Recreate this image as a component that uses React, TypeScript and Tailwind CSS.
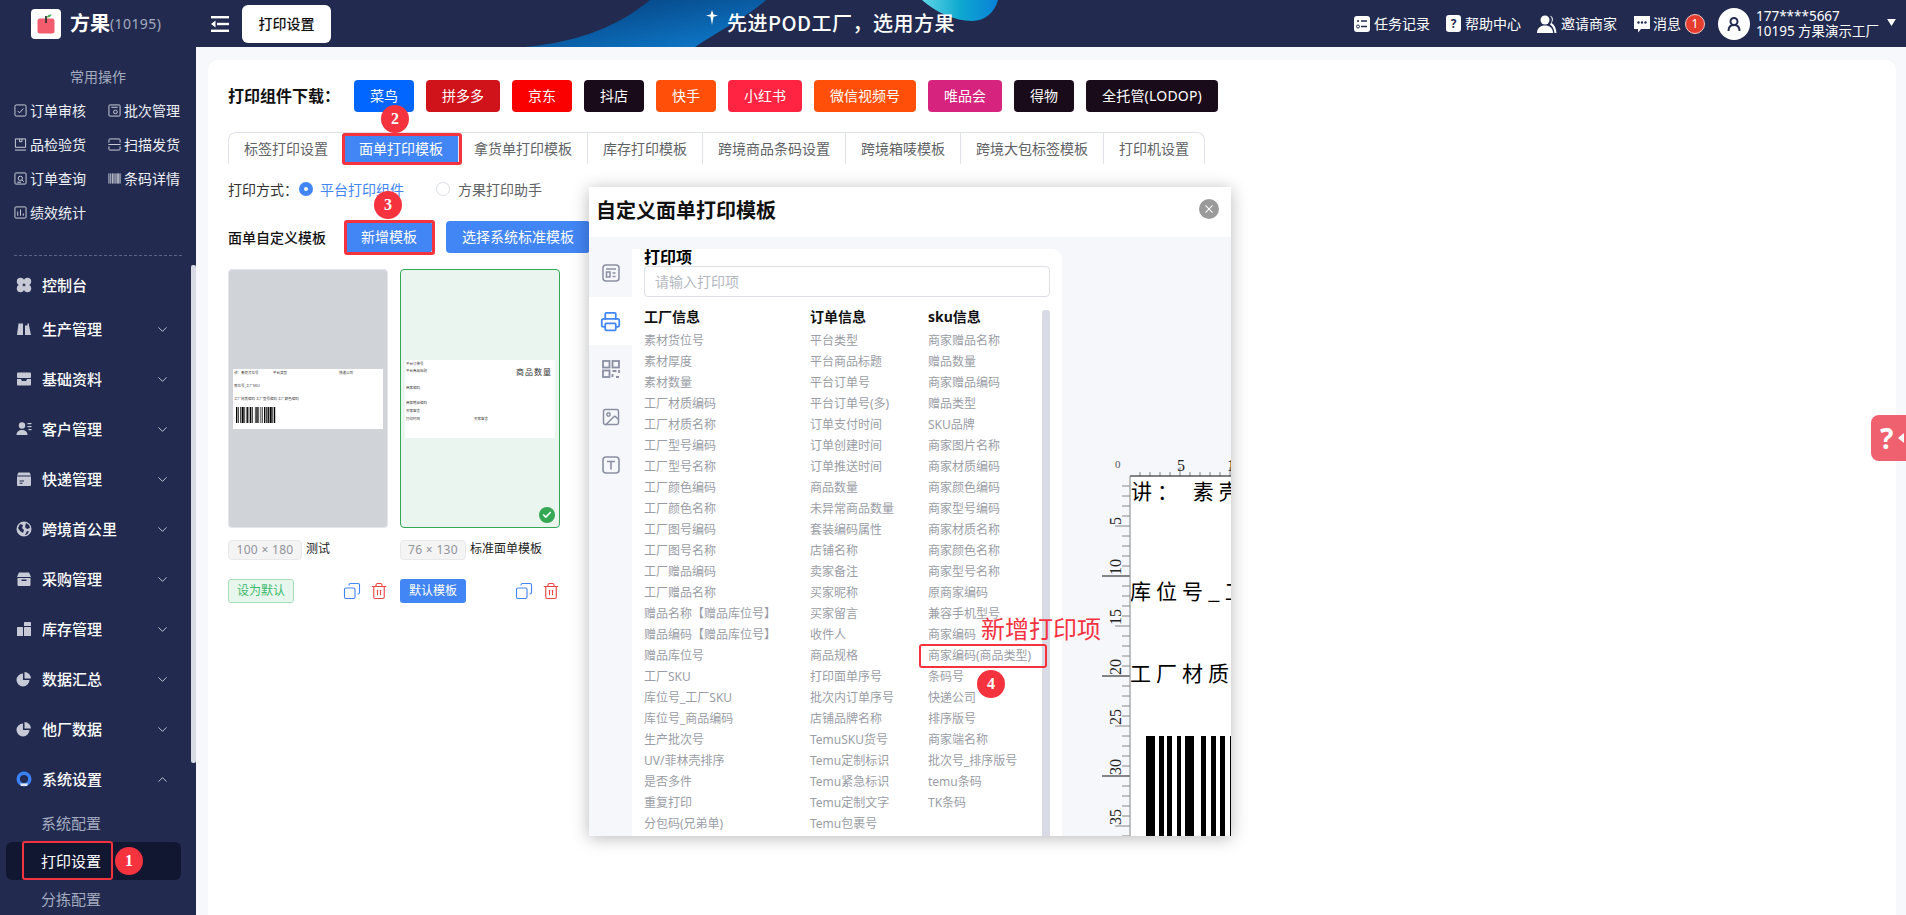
import React from "react";
import { ChevronDown, ChevronUp, Printer, Image as ImageIcon, Copy, Trash2, Check, Plus } from "lucide-react";

const brands = [
  ["菜鸟", "bg-[#0066ff]"],
  ["拼多多", "bg-[#d0121b]"],
  ["京东", "bg-[#fa0000]"],
  ["抖店", "bg-[#1a0b1a]"],
  ["快手", "bg-[#ff4f08]"],
  ["小红书", "bg-[#ff2442]"],
  ["微信视频号", "bg-[#ff4f08]"],
  ["唯品会", "bg-[#d6247e]"],
  ["得物", "bg-[#1a0b1a]"],
  ["全托管(LODOP)", "bg-[#1a0b1a] tracking-[.2px]"],
];
const tabs = ["标签打印设置", "面单打印模板", "拿货单打印模板", "库存打印模板", "跨境商品条码设置", "跨境箱唛模板", "跨境大包标签模板", "打印机设置"];
const col1 = ["素材货位号","素材厚度","素材数量","工厂材质编码","工厂材质名称","工厂型号编码","工厂型号名称","工厂颜色编码","工厂颜色名称","工厂图号编码","工厂图号名称","工厂赠品编码","工厂赠品名称","赠品名称【赠品库位号】","赠品编码【赠品库位号】","赠品库位号","工厂SKU","库位号_工厂SKU","库位号_商品编码","生产批次号","UV/菲林壳排序","是否多件","重复打印","分包码(兄弟单)"];
const col2 = ["平台类型","平台商品标题","平台订单号","平台订单号(多)","订单支付时间","订单创建时间","订单推送时间","商品数量","未异常商品数量","套装编码属性","店铺名称","卖家备注","买家昵称","买家留言","收件人","商品规格","打印面单序号","批次内订单序号","店铺品牌名称","TemuSKU货号","Temu定制标识","Temu紧急标识","Temu定制文字","Temu包裹号"];
const col3 = ["商家赠品名称","赠品数量","商家赠品编码","赠品类型","SKU品牌","商家图片名称","商家材质编码","商家颜色编码","商家型号编码","商家材质名称","商家颜色名称","商家型号名称","原商家编码","兼容手机型号","商家编码","商家编码(商品类型)","条码号","快递公司","排序版号","商家端名称","批次号_排序版号","temu条码","TK条码"];

type IP = { className?: string };
const S = ({ className, children, vb = "0 0 16 16" }: IP & { children: React.ReactNode; vb?: string }) => (
  <svg viewBox={vb} className={className} fill="currentColor">{children}</svg>
);

/* menu icons */
const MI: Record<string, React.ReactNode> = {
  dash: <><circle cx="4.5" cy="4.5" r="3.7"/><circle cx="11.5" cy="4.5" r="3.7"/><circle cx="4.5" cy="11.5" r="3.7"/><circle cx="11.5" cy="11.5" r="3.7"/></>,
  prod: <><path d="M1 14 2.5 2.5H7V14Z"/><path d="M9 14V4.5h2.5V2.5H13V4.5l2 9.5Z"/></>,
  base: <><rect x="1" y="1.5" width="14" height="5.5" rx="1"/><path d="M1 8h4l1 2h4l1-2h4v5.5a1 1 0 0 1-1 1H2a1 1 0 0 1-1-1Z"/></>,
  cust: <><circle cx="6" cy="4.5" r="3.2"/><path d="M0.5 14c0-3.2 2.4-5 5.5-5s5.5 1.800 5.500 5Z"/><rect x="11.500" y="2" width="4" height="1.200"/><rect x="11.500" y="5" width="4" height="1.200"/><rect x="12.500" y="8" width="3" height="1.200"/></>,
  exp: <><path d="M2.500 1.500h11l1.500 3H1Z"/><path d="M1 5.500h14V14a1 1 0 0 1-1 1H2a1 1 0 0 1-1-1ZM3.500 9.500v1H8v-1Zm0 2.300v1h3v-1Z" fillRule="evenodd"/></>,
  globe: <path d="M8 .5a7.500 7.500 0 1 0 0 15 7.500 7.500 0 0 0 0-15ZM4 3l3 1-1 3 2 2-1 3-3-2-2-3Zm6-1 3 2 1 3-3 1-2-2Zm1 8 2 .5-2 3-2 .5Z" fillRule="evenodd"/>,
  shop: <><path d="M3 1.500h10l2 4.500H1Z"/><path d="M1.500 7h13v7a1 1 0 0 1-1 1h-11a1 1 0 0 1-1-1Zm4 1.500v1.500h5V8.500Z" fillRule="evenodd"/></>,
  stock: <><rect x="1" y="6" width="6" height="9" rx=".6"/><rect x="8" y="6" width="7" height="9" rx=".6"/><rect x="8" y="1" width="7" height="4" rx=".6"/></>,
  pie: <><path d="M7 2.500A6.500 6.500 0 1 0 13.500 9H7Z"/><path d="M8.500 1v6.500H15A6.500 6.500 0 0 0 8.500 1Z"/></>,
};

const Lifebuoy = ({ className }: IP) => (
  <svg viewBox="0 0 16 16" className={className}>
    <circle cx="8" cy="8" r="5.800" fill="none" stroke="#3b82f6" strokeWidth="3.400"/>
    <path d="M4 12.500h8L11 15H5Z" fill="#e5e7ef"/>
    <path d="M6 1.200h4l-.5 2h-3Z" fill="#3b82f6"/>
  </svg>
);

const menu: [string, string][] = [
  ["生产管理","prod"],["基础资料","base"],["客户管理","cust"],["快递管理","exp"],["跨境首公里","globe"],["采购管理","shop"],["库存管理","stock"],["数据汇总","pie"],["他厂数据","pie"],
];

/* quick action icons, 14px outline */
const QI: Record<string, React.ReactNode> = {
  check: <><rect x="1" y="1" width="12" height="12" rx="1.500"/><path d="M4 7.500 6 9.500 10 5"/></>,
  batch: <><rect x="1" y="1" width="12" height="12" rx="1"/><path d="M3.500 3.500h7"/><circle cx="8" cy="8.500" r="2"/></>,
  qc: <><path d="M1.500 1h11v9h-11Z"/><path d="M6 1v3h2.500V1"/><path d="M1 13h12"/></>,
  scan: <><path d="M1 5V2a1 1 0 0 1 1-1h10a1 1 0 0 1 1 1v3"/><path d="M0.500 7h13"/><path d="M1 9v3a1 1 0 0 0 1 1h10a1 1 0 0 0 1-1V9"/></>,
  query: <><rect x="1" y="1" width="12" height="12" rx="1"/><circle cx="6.800" cy="6.800" r="2.300"/><path d="m8.500 8.500 2 2M3.500 11h4"/></>,
  code: <path d="M1 1.500v11M3 1.500v11M5 1.500v11M6.500 1.500v11M8.500 1.500v11M10 1.500v11M11.500 1.500v11M13 1.500v11" />,
  stat: <><rect x="1" y="1" width="12" height="12" rx="1"/><path d="M4 10.500V6M7 10.500V3.800M10 10.500V8"/></>,
};
const quick: [string, string][] = [["订单审核","check"],["批次管理","batch"],["品检验货","qc"],["扫描发货","scan"],["订单查询","query"],["条码详情","code"],["绩效统计","stat"]];

const barsA = [2,1,1,2,1,1,3,1,1,2,2,1,1,1,2,1,1,3,1,1,2,1,1,2,1,1,1,2,2,1,1,1,2,1,3,1,1,1,2,1];
const Barcode = ({ bars, h, unit, className }: { bars: number[]; h: number; unit: number; className?: string }) => {
  let x = 0;
  const rects: React.ReactNode[] = [];
  bars.forEach((b, i) => {
    if (i % 2 === 0) rects.push(<rect key={i} x={x} y={0} width={b * unit} height={h} fill="#000" />);
    x += b * unit;
  });
  return <svg width={x} height={h} className={className}>{rects}</svg>;
};

const Badge = ({ n, className }: { n: number; className: string }) => (
  <div className={`absolute w-[28px] h-[28px] rounded-full bg-[#f5333f] text-white text-[16px] font-bold flex items-center justify-center font-['Liberation_Serif',serif] ${className}`}>{n}</div>
);

const Ruler = () => {
  const els: React.ReactNode[] = [];
  const X0 = 68, Y0 = 239;
  for (let i = 1; i <= 16; i++) {
    const x = X0 + i * 10;
    const len = i % 5 === 0 ? 9 : 4;
    els.push(<line key={"h" + i} x1={x} y1={Y0} x2={x} y2={Y0 - len} stroke="#888" />);
  }
  for (let i = 1; i <= 36; i++) {
    const y = Y0 + i * 10;
    const len = i % 10 === 0 ? 28 : i % 5 === 0 ? 15 : 8;
    els.push(<line key={"v" + i} x1={X0} y1={y} x2={X0 - len} y2={y} stroke={i % 10 === 0 ? "#111" : "#888"} />);
  }
  [5, 10, 15, 20, 25, 30, 35].forEach((n) => {
    const y = Y0 + n * 10;
    els.push(
      <text key={"t" + n} transform={`translate(${X0 - 9} ${y - 1}) rotate(-90)`} fontSize="16" fontFamily="'Liberation Serif',serif" fill="#222">{n}</text>
    );
  });
  els.push(<text key="a0" x={X0 - 15} y={Y0 - 8} fontSize="11" fontFamily="'Liberation Serif',serif" fill="#555">0</text>);
  els.push(<text key="a5" x={X0 + 47} y={Y0 - 5} fontSize="16" fontFamily="'Liberation Serif',serif" fill="#222">5</text>);
  els.push(<text key="a1" x={X0 + 97} y={Y0 - 5} fontSize="16" fontFamily="'Liberation Serif',serif" fill="#222">1</text>);
  els.push(<line key="bt" x1={X0} y1={Y0} x2={169} y2={Y0} stroke="#111" />);
  els.push(<line key="bl" x1={X0} y1={Y0} x2={X0} y2={599} stroke="#888" />);
  return <svg width="169" height="599" className="absolute left-0 top-0">{els}</svg>;
};

export default function App() {
  return (
    <div className="relative w-[1906px] h-[915px] overflow-hidden flex flex-col bg-[#f7f8fc] text-[14px] font-['Noto_Sans','Noto_Sans_CJK_SC',sans-serif]">
      {/* HEADER */}
      <header className="relative h-[47px] shrink-0 bg-[#222b4f] flex items-center overflow-hidden">
        <svg width="1906" height="47" className="absolute left-0 top-0">
          <defs>
            <linearGradient id="sw" x1="0" y1="0" x2="1" y2="1">
              <stop offset="0" stopColor="#043a75" />
              <stop offset="1" stopColor="#0f7fd2" />
            </linearGradient>
            <linearGradient id="tl" x1="0" y1="0" x2="1" y2="0">
              <stop offset="0" stopColor="#5fd6e6" />
              <stop offset=".5" stopColor="#0ea9cf" />
              <stop offset="1" stopColor="#0a80d8" />
            </linearGradient>
          </defs>
          <path d="M525 47C580 42 620 25 650 0H766C745 18 720 30 695 47Z" fill="url(#sw)" />
          <path d="M922 0C935 12 955 21 972 21 985 21 995 12 998 0Z" fill="url(#tl)" />
          <path d="M712 10l1.500 4.500 4.500 1-4.500 1.200L712 25l-1.500-8.300-4.500-1.200 4.500-1Z" fill="#fff" />
        </svg>
        <div className="relative w-[196px] shrink-0 pl-[31px] flex items-center">
          <div className="w-[30px] h-[30px] bg-white rounded-[4px] flex items-center justify-center">
            <svg viewBox="0 0 24 24" className="w-[24px] h-[24px]">
              <rect x="3.500" y="6.500" width="17" height="15" rx="2.500" fill="#f25c6c" />
              <path d="M12 11V4" stroke="#333" strokeWidth="1.800" />
              <path d="M12.500 5.500C13.500 3 15.500 2.500 17.500 2.500 17 4.500 15 6 12.500 5.500Z" fill="#4caf50" />
            </svg>
          </div>
          <span className="ml-[9px] text-[20px] font-bold text-white leading-none">方果</span>
          <span className="text-[14px] text-[#a5acc0] leading-none mt-[1px] tracking-[.4px]">(10195)</span>
        </div>
        <svg viewBox="0 0 18 16" className="relative ml-[15px] w-[18px] h-[16px]" fill="#fff">
          <rect y="0" width="18" height="2.400" /><rect x="6" y="6.800" width="12" height="2.400" /><rect y="13.600" width="18" height="2.400" /><path d="M4.500 4.500v7L0 8Z" />
        </svg>
        <div className="relative ml-[13px] w-[89px] h-[38px] rounded-[6px] bg-white flex items-center justify-center text-[14px] font-medium text-[#111]">打印设置</div>
        <div className="absolute left-[727px] top-[8px] text-[20px] leading-[30px] font-medium text-white whitespace-nowrap tracking-[.5px] font-['Noto_Sans_CJK_SC',sans-serif]">先进POD工厂，选用方果</div>
        <div className="relative ml-auto flex items-center text-white text-[14px]">
          <div className="flex items-center">
            <svg viewBox="0 0 16 16" className="w-[16px] h-[16px] mr-[4px]"><rect width="16" height="16" rx="3" fill="#fff"/><path d="M3 5h2M7 5h6M7 10.500h6" stroke="#222b4f" strokeWidth="1.500"/><circle cx="4" cy="10.500" r="1.500" fill="none" stroke="#222b4f"/></svg>
            <span>任务记录</span>
          </div>
          <div className="flex items-center ml-[16px]">
            <div className="w-[15px] h-[17px] rounded-[3px] bg-white text-[#222b4f] font-bold text-[12px] flex items-center justify-center mr-[4px]">?</div>
            <span>帮助中心</span>
          </div>
          <div className="flex items-center ml-[16px]">
            <svg viewBox="0 0 20 18" className="w-[20px] h-[18px] mr-[4px]" fill="#fff"><circle cx="8" cy="5" r="4.500"/><path d="M0 18c0-5 3.500-7.500 8-7.500s8 2.500 8 7.500Z"/><path d="M13 .8c3 .5 4 4.500 1.500 7.200 3 1.500 4.500 5 5 10h-2c-.3-4-2-7-4.500-8.500 2.500-3 2.500-6.500 0-8.700Z"/></svg>
            <span>邀请商家</span>
          </div>
          <div className="flex items-center ml-[16px]">
            <svg viewBox="0 0 18 18" className="w-[18px] h-[18px] mr-[2px]"><path d="M1 1h16v13H8l-3 3.500V14H1Z" fill="#fff"/><circle cx="5.500" cy="7.500" r="1.200" fill="#222b4f"/><circle cx="9" cy="7.500" r="1.200" fill="#222b4f"/><circle cx="12.500" cy="7.500" r="1.200" fill="#222b4f"/></svg>
            <span>消息</span>
            <div className="ml-[4px] w-[20px] h-[20px] rounded-full bg-[#e53d30] border border-[#f3c9c5] text-white text-[12px] flex items-center justify-center">1</div>
          </div>
          <div className="ml-[13px] w-[32px] h-[32px] rounded-full bg-white flex items-center justify-center">
            <svg viewBox="0 0 16 16" className="w-[16px] h-[16px]" fill="none" stroke="#222b4f" strokeWidth="2"><circle cx="8" cy="5.500" r="3.500"/><path d="M2.500 15c0-3.500 2-6 5.500-6s5.500 2.500 5.500 6"/></svg>
          </div>
          <div className="ml-[6px] w-[128px] flex flex-col leading-[15px] text-[13.500px] whitespace-nowrap">
            <span>177****5667</span>
            <span>10195&nbsp;方果演示工厂</span>
          </div>
          <svg viewBox="0 0 10 8" className="ml-[3px] mr-[10px] w-[9px] h-[7px] mb-[3px]" fill="#fff"><path d="M0 0h10L5 8Z"/></svg>
        </div>
      </header>

      <div className="flex-1 flex min-h-0">
        {/* SIDEBAR */}
        <aside className="relative w-[196px] shrink-0 bg-[#222b4f] text-white overflow-hidden">
          <div className="mt-[20px] h-[20px] leading-[20px] text-center text-[14px] text-[#a5acc0]">常用操作</div>
          <div className="mt-[6px] grid grid-cols-[94px_1fr] pl-[14px]">
            {quick.map(([t, k]) => (
              <div key={t} className="h-[34px] flex items-center text-[14px] text-[#eef0f6]">
                <svg viewBox="0 0 14 14" className="w-[13px] h-[13px] mr-[3px] shrink-0" fill="none" stroke="#d5d8e2" strokeWidth="1">{QI[k]}</svg>
                <span>{t}</span>
              </div>
            ))}
          </div>
          <div className="mt-[26px] mx-[14px] border-t border-dashed border-[#5b6485]" />
          <div className="mt-[10px] h-[38px] pl-[16px] flex items-center text-[15px] font-medium">
            <S className="w-[16px] h-[16px] text-[#c7cad6]">{MI.dash}</S>
            <span className="ml-[10px]">控制台</span>
          </div>
          {menu.map(([t, k]) => (
            <div key={t} className="h-[50px] pl-[16px] pr-[26px] flex items-center text-[15px] font-medium">
              <S className="w-[16px] h-[16px] text-[#c7cad6]">{MI[k]}</S>
              <span className="ml-[10px]">{t}</span>
              <ChevronDown className="ml-auto w-[15px] h-[15px] text-[#c7cad6]" strokeWidth={1.500} />
            </div>
          ))}
          <div className="h-[50px] pl-[16px] pr-[26px] flex items-center text-[15px] font-medium">
            <Lifebuoy className="w-[16px] h-[16px]" />
            <span className="ml-[10px]">系统设置</span>
            <ChevronUp className="ml-auto w-[15px] h-[15px] text-[#c7cad6]" strokeWidth={1.500} />
          </div>
          <div className="h-[38px] pl-[41px] flex items-center text-[15px] text-[#a5acc0]">系统配置</div>
          <div className="h-[38px] pl-[35px] ml-[6px] w-[175px] flex items-center text-[15px] text-white bg-[#111631] rounded-[6px]">打印设置</div>
          <div className="h-[38px] pl-[41px] flex items-center text-[15px] text-[#a5acc0]">分拣配置</div>
          <div className="absolute right-0 top-[218px] w-[5px] h-[498px] bg-[#d8dbe5] rounded-[2px]" />
        </aside>

        {/* MAIN */}
        <main className="flex-1 pt-[13px] pl-[12px] pr-[10px] min-w-0">
          <div className="h-[900px] bg-white rounded-[10px] pl-[20px] pt-[20px]">
            <div className="flex items-center h-[32px]">
              <span className="text-[16px] font-bold text-[#111] w-[126px] whitespace-nowrap">打印组件下载：</span>
              <div className="flex gap-[12px]">
                {brands.map(([t, c]) => (
                  <div key={t} className={`h-[32px] px-[16px] rounded-[4px] text-white text-[14px] leading-[32px] whitespace-nowrap ${c}`}>{t}</div>
                ))}
              </div>
            </div>

            <div className="mt-[20px] flex w-fit h-[32px] border-t border-l border-r border-[#e0e2ea] rounded-t-[8px]">
              {tabs.map((t, i) => (
                <div key={t} className={`px-[15px] leading-[31px] whitespace-nowrap text-[14px] ${i < tabs.length - 1 ? "border-r border-[#e0e2ea]" : ""} ${i === 1 ? "bg-[#4285f4] text-white" : "text-[#606266]"}`}>{t}</div>
              ))}
            </div>

            <div className="mt-[15px] h-[20px] flex items-center text-[14px] text-[#333]">
              <span>打印方式：</span>
              <span className="ml-[1px] w-[14px] h-[14px] rounded-full bg-[#4285f4] flex items-center justify-center"><span className="w-[4px] h-[4px] bg-white rounded-full" /></span>
              <span className="ml-[7px] text-[#4285f4]">平台打印组件</span>
              <span className="ml-[32px] w-[14px] h-[14px] rounded-full border border-[#dcdfe6] bg-white" />
              <span className="ml-[8px] text-[#606266]">方果打印助手</span>
            </div>

            <div className="mt-[22px] h-[32px] flex items-center">
              <span className="font-medium text-[#111] w-[118px]">面单自定义模板</span>
              <div className="h-[32px] w-[86px] rounded-[4px] bg-[#4285f4] text-white text-center leading-[32px]">新增模板</div>
              <div className="ml-[14px] h-[32px] px-[16px] rounded-[4px] bg-[#4285f4] text-white leading-[32px]">选择系统标准模板</div>
            </div>

            <div className="mt-[16px] flex gap-[12px]">
              {/* card 1 */}
              <div className="w-[160px]">
                <div className="h-[259px] rounded-[4px] bg-[#d0d3d8] border border-[#e2e4e8] flex items-center justify-center">
                  <div className="w-[150px] h-[60px] bg-white relative text-[3.500px] leading-[5px] text-[#333] overflow-hidden px-[1px]">
                    <div className="flex pt-[1px]"><span className="w-[39px]">讲：素壳货位号</span><span className="w-[66px]">平台类型</span><span>快递公司</span></div>
                    <div className="mt-[8px]">库位号_工厂SKU</div>
                    <div className="mt-[8px]">工厂材质编码 工厂型号编码 工厂颜色编码</div>
                    <Barcode bars={barsA} h={16} unit={.7} className="ml-[2px] mt-[6px]" />
                  </div>
                </div>
                <div className="mt-[12px] h-[20px] flex items-start">
                  <span className="w-[74px] h-[20px] rounded-[4px] bg-[#f4f4f5] border border-[#e9e9eb] text-[#909399] text-[12px] leading-[18px] text-center tracking-[.3px]">100 × 180</span>
                  <span className="ml-[4px] text-[12px] text-[#222] leading-[18px]">测试</span>
                </div>
                <div className="mt-[19px] h-[24px] flex items-center">
                  <span className="w-[66px] h-[24px] rounded-[3px] bg-[#e8f7ee] border border-[#a3e0b8] text-[#3cb96b] text-[12px] leading-[22px] text-center">设为默认</span>
                  <Copy className="ml-[49px] w-[18px] h-[18px] text-[#4285f4] -scale-x-100" strokeWidth={1.500} />
                  <Trash2 className="ml-[9px] w-[18px] h-[18px] text-[#ee4444]" strokeWidth={1.500} />
                </div>
              </div>
              {/* card 2 */}
              <div className="w-[160px]">
                <div className="relative h-[259px] rounded-[4px] bg-[#e9f5ee] border border-[#34a853] flex items-center justify-center">
                  <div className="w-[150px] h-[78px] bg-white relative text-[3.500px] leading-[5px] text-[#333] overflow-hidden px-[1px]">
                    <div className="flex justify-between">
                      <div className="pt-[1px]"><div>平台订单号</div><div className="mt-[2px]">平台商品标题</div></div>
                      <span className="text-[8px] leading-[10px] mt-[7px] mr-[2px] tracking-[1px]">商品数量</span>
                    </div>
                    <div className="mt-[8px]">商家编码</div>
                    <div className="mt-[10px]">商家赠品编码</div>
                    <div className="mt-[3px]">买家留言</div>
                    <div className="mt-[3px] flex"><span className="w-[68px]">打印时间</span><span>买家留言</span></div>
                  </div>
                  <div className="absolute right-[4px] bottom-[4px] w-[16px] h-[16px] rounded-full bg-[#34a853] flex items-center justify-center">
                    <Check className="w-[10px] h-[10px] text-white" strokeWidth={4} />
                  </div>
                </div>
                <div className="mt-[12px] h-[20px] flex items-start">
                  <span className="w-[66px] h-[20px] rounded-[4px] bg-[#f4f4f5] border border-[#e9e9eb] text-[#909399] text-[12px] leading-[18px] text-center tracking-[.3px]">76 × 130</span>
                  <span className="ml-[4px] text-[12px] text-[#222] leading-[18px] whitespace-nowrap">标准面单模板</span>
                </div>
                <div className="mt-[19px] h-[24px] flex items-center">
                  <span className="w-[66px] h-[24px] rounded-[3px] bg-[#4285f4] text-white text-[12px] leading-[24px] text-center">默认模板</span>
                  <Copy className="ml-[49px] w-[18px] h-[18px] text-[#4285f4] -scale-x-100" strokeWidth={1.500} />
                  <Trash2 className="ml-[9px] w-[18px] h-[18px] text-[#ee4444]" strokeWidth={1.500} />
                </div>
              </div>
            </div>
          </div>
        </main>
      </div>

      {/* MODAL */}
      <div className="absolute left-[589px] top-[187px] w-[642px] h-[649px] bg-white shadow-[0_2px_16px_rgba(0,0,0,0.28)] flex flex-col overflow-hidden">
        <div className="h-[50px] shrink-0 flex items-center pl-[7px] pr-[12px]">
          <span className="text-[20px] font-bold text-[#111] mt-[-2px]">自定义面单打印模板</span>
          <div className="ml-auto w-[20px] h-[20px] rounded-full bg-[#9a9a9a] flex items-center justify-center mt-[-6px]">
            <Plus className="w-[16px] h-[16px] text-white rotate-45" strokeWidth={1.500} />
          </div>
        </div>
        <div className="flex-1 flex bg-[#f5f7fa] min-h-0">
          <div className="w-[43px] shrink-0 flex flex-col pt-[12px] text-[#8a90a2]">
            <div className="h-[48px] flex items-center justify-center">
              <svg viewBox="0 0 18 18" className="w-[18px] h-[18px]" fill="none" stroke="currentColor" strokeWidth="1.500"><rect x="1" y="1" width="16" height="16" rx="3"/><path d="M4 5h10"/><rect x="4.500" y="8" width="3.500" height="5"/><path d="M10.500 9h3M10.500 12.500h3"/></svg>
            </div>
            <div className="h-[48px] bg-white flex items-center justify-center">
              <Printer className="w-[21px] h-[21px] text-[#4285f4]" strokeWidth={2} />
            </div>
            <div className="h-[48px] flex items-center justify-center">
              <svg viewBox="0 0 18 18" className="w-[18px] h-[18px]" fill="none" stroke="currentColor" strokeWidth="1.800"><rect x="1" y="1" width="6.500" height="6.500"/><rect x="10.500" y="1" width="6.500" height="6.500"/><rect x="1" y="10.500" width="6.500" height="6.500"/><path d="M10.500 11h4M17 10v3M10.500 14v3M14 17h3"/></svg>
            </div>
            <div className="h-[48px] flex items-center justify-center">
              <ImageIcon className="w-[20px] h-[20px]" strokeWidth={1.800} />
            </div>
            <div className="h-[48px] flex items-center justify-center">
              <svg viewBox="0 0 18 18" className="w-[18px] h-[18px]" fill="none" stroke="currentColor" strokeWidth="1.600"><rect x="1" y="1" width="16" height="16" rx="3"/><path d="M5 5.500h8M9 5.500V13.500"/></svg>
            </div>
          </div>

          <div className="relative mt-[12px] w-[430px] shrink-0 bg-white rounded-tr-[10px] pl-[12px] pr-[12px] overflow-hidden">
            <div className="text-[16px] font-bold text-black leading-[17px] h-[17px]">打印项</div>
            <div className="h-[31px] border border-[#dcdfe6] rounded-[4px] pl-[10px] text-[14px] leading-[29px] text-[#b4b8c0]">请输入打印项</div>
            <div className="mt-[9px] flex text-[12px] text-[#9a9da6] leading-[21px] whitespace-nowrap">
              <div className="w-[166px]">
                <div className="text-[14px] font-bold text-[#111] mb-[3px]">工厂信息</div>
                {col1.map((t) => <div key={t}>{t}</div>)}
              </div>
              <div className="w-[118px]">
                <div className="text-[14px] font-bold text-[#111] mb-[3px]">订单信息</div>
                {col2.map((t) => <div key={t}>{t}</div>)}
              </div>
              <div>
                <div className="text-[14px] font-bold text-[#111] mb-[3px]">sku信息</div>
                {col3.map((t) => <div key={t}>{t}</div>)}
              </div>
            </div>
            <div className="absolute left-[410px] top-[61px] w-[8px] h-[540px] bg-[#d8dbe5] rounded-t-[3px]" />
          </div>

          {/* designer canvas */}
          <div className="relative flex-1 min-w-0 overflow-hidden">
            <Ruler />
            <div className="absolute left-[69px] top-[240px] w-[100px] h-[360px] bg-white overflow-hidden text-[21px] text-black leading-[28px] whitespace-nowrap font-['Noto_Sans_CJK_SC',sans-serif]">
              <div className="absolute left-[0px] top-[-1px] tracking-[5px]">讲： 素壳</div>
              <div className="absolute left-[-1px] top-[99px] tracking-[5px]">库位号_工</div>
              <div className="absolute left-[-1px] top-[181px] tracking-[5px]">工厂材质</div>
              <Barcode className="absolute left-[15px] top-[259px]" bars={[9,4,5,3,5,5,4,4,9,7,5,5,5,4,5,5,9,4]} h={102} unit={1} />
            </div>
          </div>
        </div>
      </div>

      {/* ANNOTATIONS */}
      <div className="absolute left-[22px] top-[841px] w-[91px] h-[39px] border-[2px] border-[#f5333f] rounded-[3px]" />
      <Badge n={1} className="left-[115px] top-[847px]" />
      <div className="absolute left-[342px] top-[133px] w-[120px] h-[32px] border-[3px] border-[#f5333f] rounded-[3px]" />
      <Badge n={2} className="left-[381px] top-[105px]" />
      <div className="absolute left-[344px] top-[220px] w-[91px] h-[35px] border-[3px] border-[#f5333f] rounded-[3px]" />
      <Badge n={3} className="left-[374px] top-[191px]" />
      <div className="absolute left-[919px] top-[644px] w-[128px] h-[24px] border-[2px] border-[#f5333f] rounded-[3px]" />
      <Badge n={4} className="left-[977px] top-[670px]" />
      <div className="absolute left-[981px] top-[611px] text-[24px] leading-[36px] text-[#f5333f] whitespace-nowrap">新增打印项</div>

      {/* HELP */}
      <div className="absolute right-0 top-[415px] w-[35px] h-[46px] rounded-l-[8px] bg-[#f0616f] flex items-center pl-[9px] text-white">
        <span className="text-[28px] font-bold leading-none">?</span>
        <span className="w-0 h-0 ml-[5px] border-y-[5px] border-y-transparent border-r-[6px] border-r-white" />
      </div>
    </div>
  );
}
